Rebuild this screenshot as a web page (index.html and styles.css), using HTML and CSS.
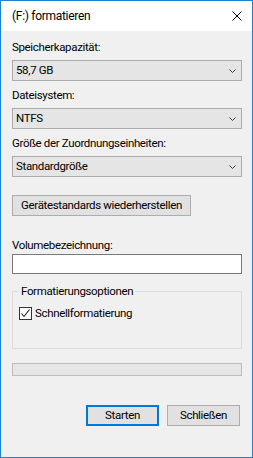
FILE: index.html
```html
<!DOCTYPE html>
<html lang="de">
<head>
<meta charset="utf-8">
<title>(F:) formatieren</title>
<link rel="stylesheet" href="styles.css">
</head>
<body>
<div class="window">
  <div class="titlebar">
    <span class="title">(F:) formatieren</span>
    <svg class="close" width="10" height="10" viewBox="0 0 10 10"><path d="M0.5 0.5 L9.5 9.5 M9.5 0.5 L0.5 9.5" stroke="#000" stroke-width="1" fill="none"/></svg>
  </div>
  <div class="content">
    <div class="lbl first">Speicherkapazität:</div>
    <div class="combo"><span>58,7 GB</span><svg class="chev" width="7" height="4" viewBox="0 0 7 4"><polyline points="0.5,0.5 3.5,3.5 6.5,0.5" stroke="#3c3c3c" stroke-width="1" fill="none"/></svg></div>
    <div class="lbl">Dateisystem:</div>
    <div class="combo"><span>NTFS</span><svg class="chev" width="7" height="4" viewBox="0 0 7 4"><polyline points="0.5,0.5 3.5,3.5 6.5,0.5" stroke="#3c3c3c" stroke-width="1" fill="none"/></svg></div>
    <div class="lbl">Größe der Zuordnungseinheiten:</div>
    <div class="combo"><span>Standardgröße</span><svg class="chev" width="7" height="4" viewBox="0 0 7 4"><polyline points="0.5,0.5 3.5,3.5 6.5,0.5" stroke="#3c3c3c" stroke-width="1" fill="none"/></svg></div>
    <div class="btn reset">Gerätestandards wiederherstellen</div>
    <div class="lbl vol">Volumebezeichnung:</div>
    <div class="textbox"></div>
    <fieldset class="group">
      <legend>Formatierungsoptionen</legend>
      <div class="check"><span class="box"><svg width="11" height="11" viewBox="0 0 11 11"><polyline points="1.5,5.5 4,8.5 9.5,1.5" stroke="#1a1a1a" stroke-width="1.1" fill="none"/></svg></span><span>Schnellformatierung</span></div>
    </fieldset>
    <div class="progress"></div>
    <div class="actions">
      <div class="btn primary">Starten</div>
      <div class="btn">Schließen</div>
    </div>
  </div>
</div>
</body>
</html>
```
FILE: styles.css
```css
* { box-sizing: border-box; }
html, body { margin: 0; padding: 0; }
body {
  font-family: "Segoe UI", Roboto, "Liberation Sans", sans-serif;
  font-size: 11.5px;
  letter-spacing: -0.35px;
  line-height: 15px;
  color: #000;
  background: #f0f0f0;
}
.window {
  width: 253px;
  height: 458px;
  border: 1px solid #1883d7;
  background: #f0f0f0;
  display: flex;
  flex-direction: column;
}
.titlebar {
  height: 30px;
  background: #fff;
  display: flex;
  align-items: center;
  justify-content: space-between;
  padding: 0 10px 0 11px;
  flex: none;
}
.title { font-size: 12px; letter-spacing: -0.3px; }
.close { display: block; margin-top: -1px; }
.content {
  display: flex;
  flex-direction: column;
  padding: 0 10px 0 11px;
  flex: 1;
}
.lbl { margin-top: 7px; height: 15px; }
.lbl.first { margin-top: 9px; }
.combo {
  margin-top: 5px;
  height: 21px;
  background: #e5e5e5;
  border: 1px solid #acacac;
  display: flex;
  align-items: center;
  justify-content: space-between;
  padding: 0 5px 0 3px;
}
.chev { display: block; }
.btn {
  height: 21px;
  background: #e1e1e1;
  border: 1px solid #adadad;
  display: flex;
  align-items: center;
  justify-content: center;
  white-space: nowrap;
}
.reset { margin-top: 18px; width: 179px; }
.vol { margin-top: 22px; }
.textbox {
  margin-top: 1px;
  height: 20px;
  background: #fff;
  border: 1px solid #7a7a7a;
}
.group {
  margin: 10px 0 0 0;
  border: 1px solid #dcdcdc;
  padding: 0 0 27px 6px;
  min-width: 0;
}
.group legend {
  padding: 0 2px;
  line-height: 15px;
}
.check {
  margin-top: 7px;
  display: flex;
  align-items: center;
  height: 15px;
}
.box {
  width: 13px;
  height: 13px;
  border: 1px solid #333;
  background: #fff;
  margin-right: 3px;
  display: flex;
  align-items: center;
  justify-content: center;
}
.box svg { display: block; }
.progress {
  margin-top: 14px;
  height: 13px;
  background: #e6e6e6;
  border: 1px solid #bcbcbc;
}
.actions {
  margin-top: 29px;
  margin-right: 2px;
  display: flex;
  justify-content: flex-end;
  gap: 8px;
}
.actions .btn { width: 73px; }
.btn.primary { border: 2px solid #0078d7; }
```
